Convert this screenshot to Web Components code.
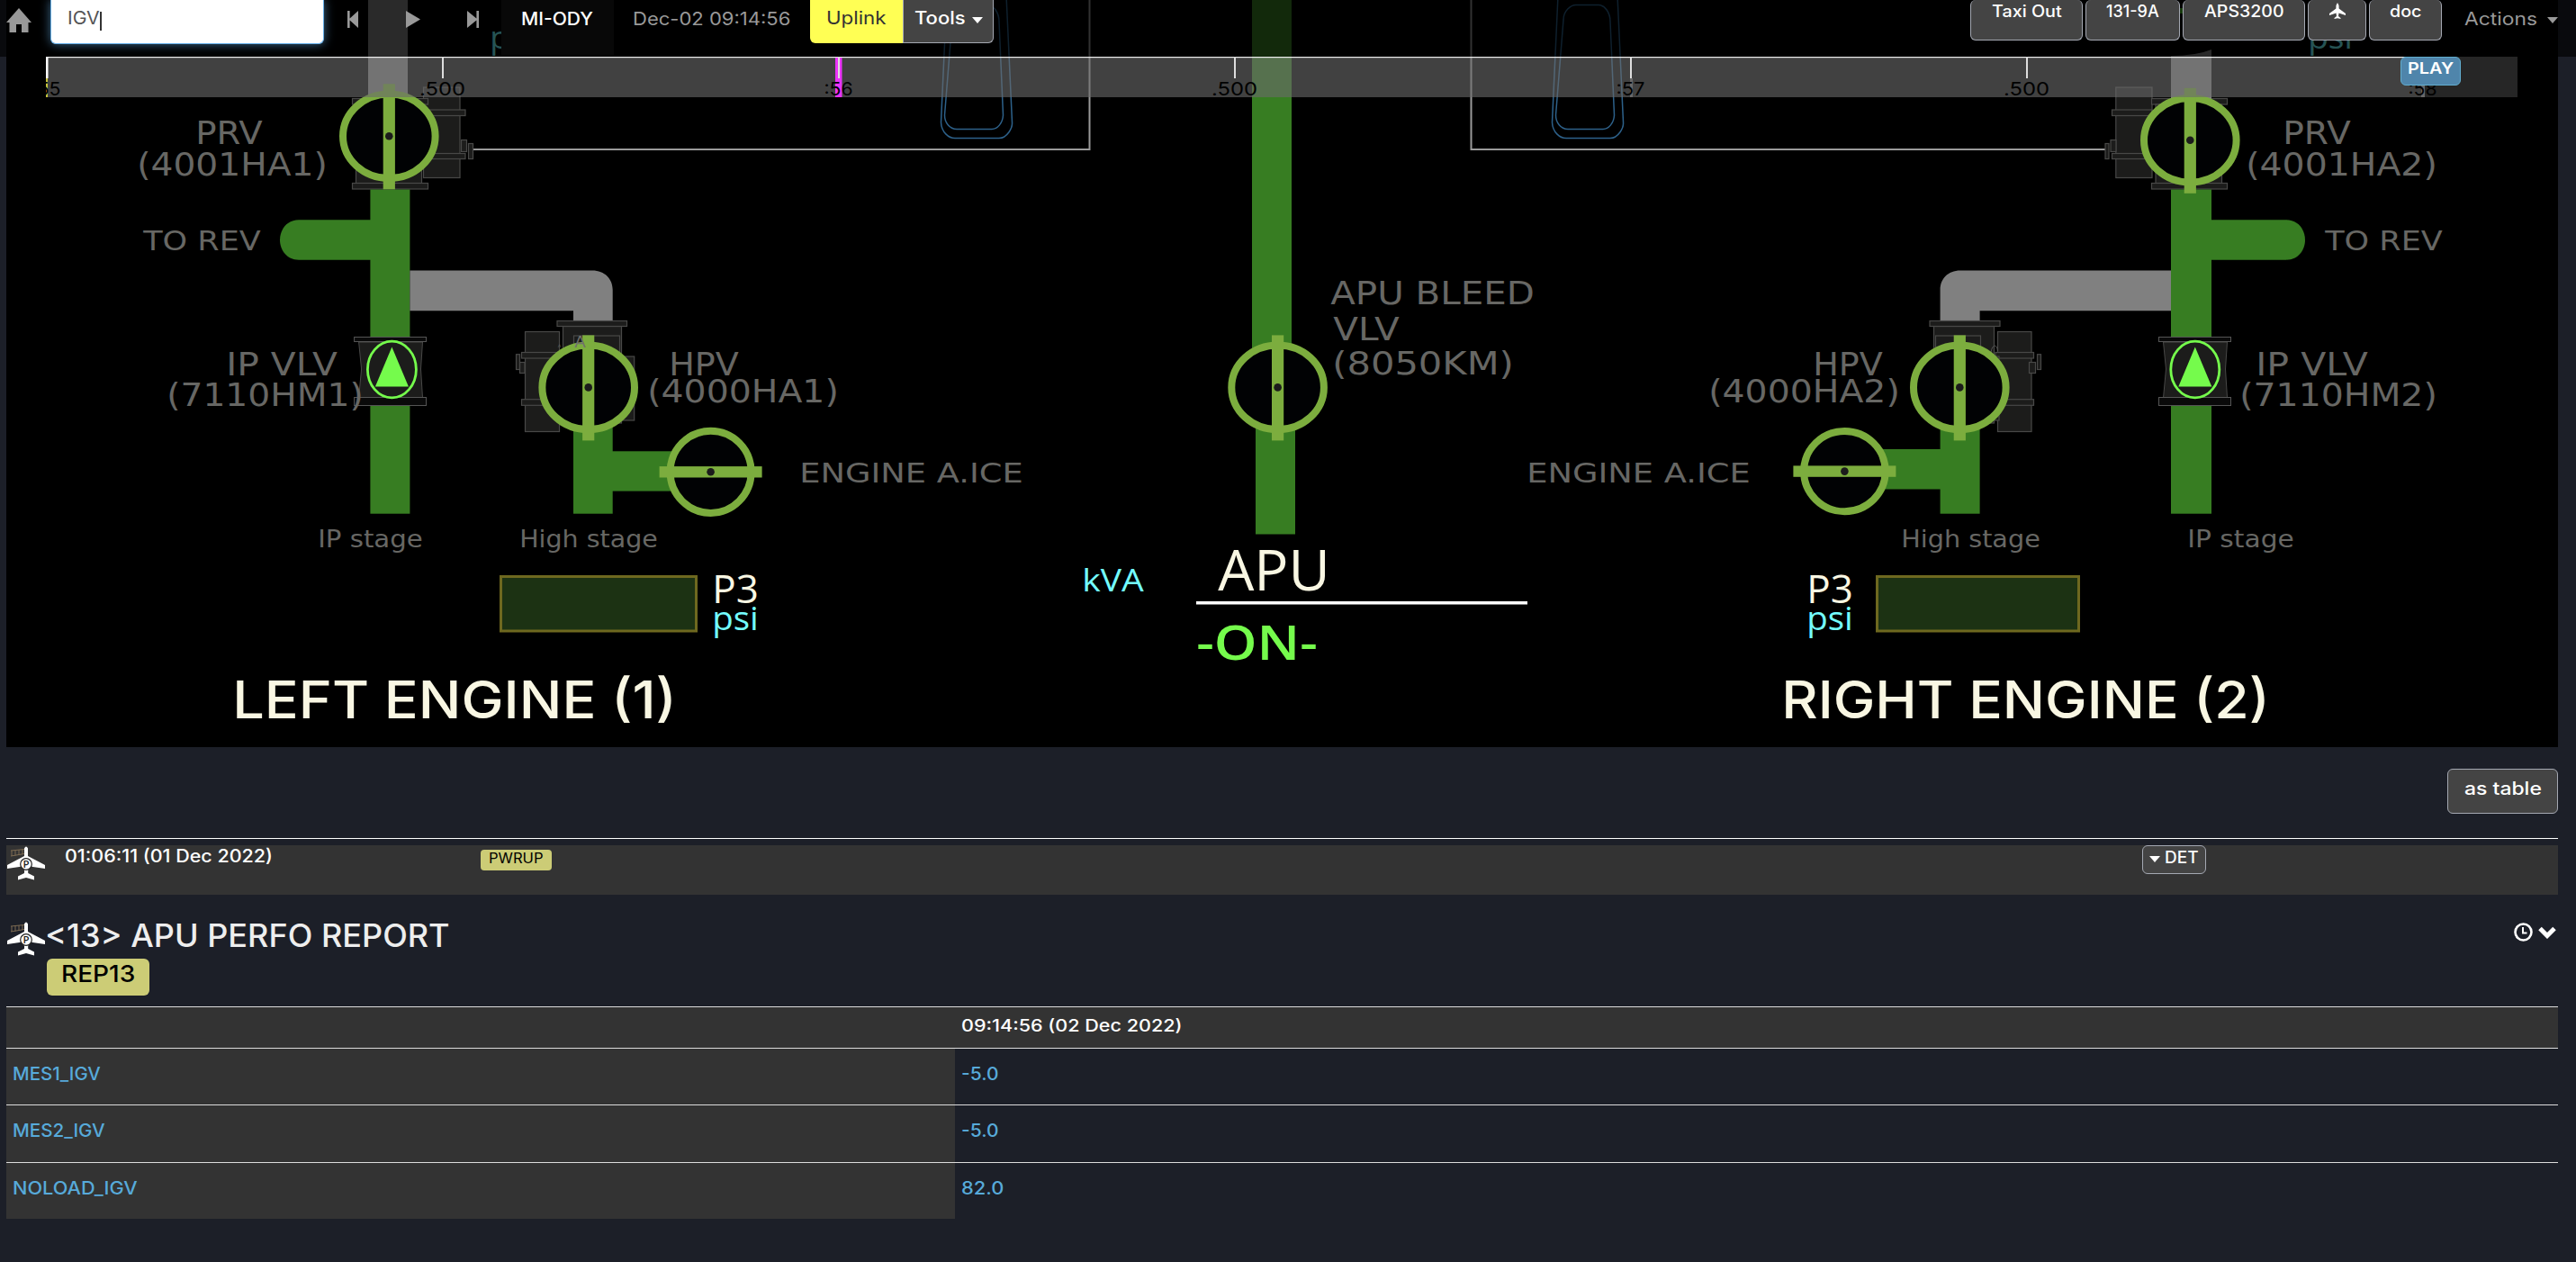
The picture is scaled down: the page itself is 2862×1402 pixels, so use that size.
<!DOCTYPE html>
<html lang="en">
<head>
<meta charset="utf-8">
<title>MI-ODY</title>
<style>
html,body{margin:0;background:#1c1f28}
body{width:2862px;height:1402px;overflow:hidden;font-family:Inter,"Open Sans",sans-serif;color:#fff}
</style>
</head>
<body>
<app-page></app-page>
<script>
const define = (name, html, after) => {
  const tpl = document.createElement('template');
  tpl.innerHTML = html;
  customElements.define(name, class extends HTMLElement {
    connectedCallback() {
      if (this.shadowRoot) return;
      const root = this.attachShadow({ mode: 'open' });
      root.appendChild(tpl.content.cloneNode(true));
      if (after) after(this, root);
    }
  });
};

/* One line of text, set to a given width (w) at a given size (s) in a line box of height h. */
customElements.define('fit-text', class extends HTMLElement {
  connectedCallback() {
    if (this.shadowRoot) return;
    const w = +this.getAttribute('w'), s = +this.getAttribute('s') || 20;
    const root = this.attachShadow({ mode: 'open' });
    root.innerHTML = `<style>
      :host{display:block;flex:none;width:${w}px;font-size:${s}px;line-height:24px;white-space:pre;overflow:visible}
      span{display:inline-block;transform-origin:0 50%}
    </style><span><slot></slot></span>`;
    const span = root.querySelector('span');
    span.style.transform = `scaleX(${w / span.offsetWidth})`;
  }
});

/* Bordered push button; the slot carries its label or icon. */
define('ui-button', `<style>
  :host{display:flex;flex:none;box-sizing:border-box;justify-content:center;align-items:flex-start;
    background:#444;border:1.5px solid #a4a8b2;border-radius:6px;color:#fff;font-weight:500}
</style><slot></slot>`);

define('ui-badge', `<style>
  :host{display:flex;flex:none;box-sizing:border-box;justify-content:center;background:#cccc76;border-radius:5px;color:#000}
</style><slot></slot>`);

define('ui-caret', `<style>:host{display:block;flex:none;width:12px;height:7px}svg{display:block}</style>
<svg width="12" height="7"><path d="M0 0H12L6 7Z" fill="currentColor"/></svg>`);

define('parked-plane', `<style>:host{display:block;flex:none;width:43px;height:38px}svg{display:block}</style>
<svg width="43" height="38" viewBox="0 0 43 38">
  <g fill="none" stroke="#7d6b52" stroke-width="1"><path d="M4 5L19 3.5M4 11L19 8.5M5 5v6M9 4.500v6M13 4v6M17 3.600v5.500"/></g>
  <path fill="#fff" d="M19 2.500Q21 -1.500 23 2.500V11L42 21V25L25 22.500L23.200 27V30L30 33.500V37.500L21 35L12 37.500V33.500L19 30V27L17 22.500L0 25V21L19 11Z"/>
  <circle cx="21" cy="20" r="6.300" fill="#fff" stroke="#222" stroke-width="1.200"/>
  <text x="21" y="24.200" font-size="11.500" text-anchor="middle" font-family="Open Sans,sans-serif" font-weight="600" fill="#222">P</text>
</svg>`);

/* ---------- bleed air synoptic ---------- */
const GREEN = '#377d22', GREY = '#808080', LIME = '#7cad3e', LABEL = '#676764';
const rect = (x1, y1, x2, y2, fill, extra = '') =>
  `<rect x="${x1}" y="${y1}" width="${x2 - x1}" height="${y2 - y1}" fill="${fill}" ${extra}/>`;
const part = (x1, y1, x2, y2) => rect(x1, y1, x2, y2, '#1c1c1b', 'stroke="#484847" stroke-width="1.2"');
const text = (x1, x2, y, size, fill, str, family = 'DejaVu Sans', weight = 400) =>
  `<text x="${x1 + 1.2}" y="${y}" font-size="${size}" fill="${fill}" font-weight="${weight}" font-family="${family},sans-serif" textLength="${x2 - x1 - 2.4}" lengthAdjust="spacingAndGlyphs">${str}</text>`;
const valve = (cx, cy, rx, ry, horizontal) =>
  `<ellipse cx="${cx}" cy="${cy}" rx="${rx - 3.7}" ry="${ry - 3.7}" fill="#010204" stroke="${LIME}" stroke-width="8"/>` +
  (horizontal ? rect(cx - 57, cy - 6.2, cx + 57, cy + 6.2, LIME) : rect(cx - 6.6, cy - 58, cx + 6.6, cy + 59, LIME)) +
  `<circle cx="${cx}" cy="${cy}" r="4.300" fill="#1c1c1c"/>`;
const ipValve = (x1, x2, cx) =>
  `<path d="M${x1 + 5} 380H${x2 - 4}L${x2 - 6} 410L${x2 - 4} 442H${x1 + 5}L${x1 + 8} 410Z" fill="#1c1c1b" stroke="#484847"/>` +
  rect(x1, 374.5, x2, 379.5, '#0a0a0a', 'stroke="#555"') + rect(x1, 441.5, x2, 450.5, '#0a0a0a', 'stroke="#555"') +
  `<ellipse cx="${cx}" cy="410.500" rx="27" ry="31.300" fill="#1c1c1b" stroke="#75fb4c" stroke-width="2.800"/>
   <path d="M${cx} 385.500L${cx + 18.5} 429.500H${cx - 18.5}Z" fill="#75fb4c"/>`;
const exchanger = dx => `<g transform="translate(${dx} 0)" fill="none" stroke="#2d618a" stroke-width="1.500">
   <path d="M1052 -5L1045.500 136C1046 147 1054 153.500 1061 153.500H1110C1119 153.500 1125 142 1124.500 136L1118 -5"/>
   <path d="M1058 22C1058 12 1066 5.500 1072 5.500H1097C1104 5.500 1110 14 1110 24L1114.500 128C1114 137 1108 143.500 1102 143.500H1063C1055 143.500 1049.500 136 1049.500 128Z"/></g>`;

define('bleed-synoptic', `<style>:host{display:block;width:2835px;height:830px;background:#000}svg{display:block}</style>
<svg width="2835" height="830" viewBox="7 0 2835 830">
  <g fill="none" stroke="#999" stroke-width="2">
    <path d="M523 166H1210.500V0"/><path d="M2340 166H1634.500V0"/>
  </g>
  ${exchanger(0)}${exchanger(679)}

  ${part(470.5, 97, 511, 197.5)}${part(391.5, 109.5, 475.5, 116)}${part(395.5, 116, 468.5, 204)}${part(391.5, 203.5, 475.5, 210)}
  ${part(470.5, 122, 517, 128.5)}${part(470.5, 170.5, 517, 176.5)}${part(512.5, 155.5, 518.5, 168.5)}${part(520.5, 159.5, 525.5, 176.5)}
  ${rect(409, 0, 453, 116, GREY)}
  ${rect(411.4, 210.5, 455.4, 375, GREEN)}${rect(411.4, 451, 455.4, 570.7, GREEN)}
  <path d="M412 244.300H332C318 244.300 311 256 311 266.500S318 288.700 332 288.700H412Z" fill="${GREEN}"/>
  <path d="M455.400 300.500H658C672 300.500 680.700 310 680.700 322V356H637V345.200H455.400Z" fill="${GREY}"/>
  ${valve(432.3, 151.3, 55, 50.5)}
  ${ipValve(393.6, 473.5, 435.4)}
  ${rect(637, 460, 680.7, 570.7, GREEN)}${rect(680, 501.3, 752, 545.6, GREEN)}
  ${part(583.5, 368.5, 621.5, 479.5)}${part(579.5, 391.5, 625, 398)}${part(579.5, 443.7, 625, 450.3)}
  ${part(577.5, 402.5, 583, 414.5)}${part(573.5, 393.7, 577.5, 410.5)}
  ${part(680, 396, 704.7, 467)}${part(625.5, 362.5, 690.5, 470)}${part(637.5, 373, 688.5, 420)}${part(619, 356.5, 696.5, 362.5)}
  ${valve(653.7, 430.4, 55, 50.5)}
  ${valve(789.6, 524.3, 48.7, 49.3, true)}
  ${text(637, 652, 386, 17, '#70706c', 'A')}${text(618, 625, 392, 12, '#5c5c5a', '^')}

  ${rect(1391, 0, 1435, 400, GREEN)}${rect(1395, 460, 1439, 593.5, GREEN)}
  ${valve(1419.6, 430.4, 55, 50.5)}

  ${part(2350.8, 97, 2391, 197.5)}${part(2346.5, 122, 2391, 128.5)}${part(2346.5, 170.5, 2391, 176.5)}${part(2345, 155.5, 2351, 168.5)}${part(2339, 159.5, 2343, 176.5)}
  ${part(2390.5, 109.5, 2474.5, 116)}${part(2395, 116, 2468.5, 204)}${part(2390.5, 203.5, 2474.5, 210)}
  <path d="M2412 116V62Q2440 62 2457 55V116Z" fill="${GREY}"/>
  <rect x="2418" y="9" width="12" height="6" fill="#4cb02e"/>
  ${rect(2412, 210.5, 2457, 375, GREEN)}${rect(2412, 451, 2457, 570.7, GREEN)}
  <path d="M2456 244.300H2540C2554 244.300 2561 256 2561 266.500S2554 288.700 2540 288.700H2456Z" fill="${GREEN}"/>
  <path d="M2412 300.500H2178C2164 300.500 2155.600 310 2155.600 322V356H2199.600V345.200H2412Z" fill="${GREY}"/>
  ${valve(2433.3, 155.8, 55, 50.5)}
  ${ipValve(2398.5, 2478.5, 2438.8)}
  ${rect(2155.6, 460, 2199.6, 570.7, GREEN)}${rect(2090, 499, 2156, 543.5, GREEN)}
  ${part(2219.5, 368.5, 2257, 479.5)}${part(2217, 391.5, 2259.5, 398)}${part(2217, 443.7, 2259.5, 450.3)}
  ${part(2254.5, 402.5, 2261.5, 414.5)}${part(2263.5, 393.7, 2267.5, 410.5)}
  ${part(2200, 396, 2221, 467)}${part(2148.5, 362.5, 2215.5, 470)}${part(2150.500, 373, 2200.5, 420)}${part(2144, 356.5, 2222, 362.5)}
  <path d="M2212 392C2213 382 2219 382 2219.500 390" fill="none" stroke="#555"/>
  ${valve(2177.3, 430.4, 55, 50.5)}
  ${valve(2049.4, 523.6, 49, 48.4, true)}

  ${text(216, 293, 160, 35.5, LABEL, 'PRV')}${text(151, 365, 195, 35.5, LABEL, '(4001HA1)')}
  ${text(158, 291, 278, 30, LABEL, 'TO REV')}
  ${text(250, 376, 417, 35.5, LABEL, 'IP VLV')}${text(184, 405, 451, 35.500, LABEL, '(7110HM1)')}
  ${text(742, 822, 417, 35.5, LABEL, 'HPV')}${text(718, 933, 447, 35.5, LABEL, '(4000HA1)')}
  ${text(887, 1138, 536, 30, LABEL, 'ENGINE A.ICE')}
  ${text(352, 471, 607.5, 26, LABEL, 'IP stage')}${text(576, 732, 607.5, 26, LABEL, 'High stage')}
  ${text(1477, 1706, 338, 35, LABEL, 'APU BLEED')}${text(1480, 1556, 378, 35, LABEL, 'VLV')}${text(1479, 1683, 416, 35, LABEL, '(8050KM)')}
  ${text(2535, 2613, 160, 35.5, LABEL, 'PRV')}${text(2494, 2709, 195, 35.5, LABEL, '(4001HA2)')}
  ${text(2582, 2715, 278, 30, LABEL, 'TO REV')}
  ${text(2505, 2632, 417, 35.5, LABEL, 'IP VLV')}${text(2487, 2709, 451, 35.5, LABEL, '(7110HM2)')}
  ${text(2013, 2093, 417, 35.5, LABEL, 'HPV')}${text(1897, 2112, 447, 35.5, LABEL, '(4000HA2)')}
  ${text(1695, 1946, 536, 30, LABEL, 'ENGINE A.ICE')}
  ${text(2111, 2268, 607.5, 26, LABEL, 'High stage')}${text(2429, 2550, 607.5, 26, LABEL, 'IP stage')}

  ${rect(556.5, 640.5, 773.5, 701, '#1c3213', 'stroke="#6e681f" stroke-width="3"')}
  ${rect(2085.5, 640.5, 2309.5, 701, '#1c3213', 'stroke="#6e681f" stroke-width="3"')}
  ${text(790, 844, 670, 43, '#f9f7e3', 'P3', 'Open Sans', 500)}${text(790, 844, 700, 36, '#73fbfd', 'psi', 'Open Sans', 500)}
  ${text(2006, 2060, 670, 43, '#f9f7e3', 'P3', 'Open Sans', 500)}${text(2006, 2060, 700, 36, '#73fbfd', 'psi', 'Open Sans', 500)}
  ${text(1201, 1272, 657, 35, '#73fbfd', 'kVA', 'Open Sans', 500)}
  ${text(1352, 1479, 656, 63, '#f9f7e3', 'APU', 'Open Sans', 500)}
  ${rect(1329, 668, 1697, 671.5, '#fff')}
  ${text(1328, 1465, 733, 52, '#75fb4c', '-ON-', 'Open Sans', 600)}
  ${text(257, 753, 798, 58, '#f9f7e3', 'LEFT ENGINE (1)', 'Inter', 500)}
  ${text(1978, 2523, 798, 58, '#f9f7e3', 'RIGHT ENGINE (2)', 'Inter', 500)}
  ${text(543, 594, 54, 35, '#73fbfd', 'psi', 'Open Sans', 500)}${text(2563, 2615, 54, 35, '#73fbfd', 'psi', 'Open Sans', 500)}
</svg>`);

/* ---------- time ruler ---------- */
const tick = x => rect(x - 1, 0, x + 1, 24, '#ddd');
const mark = (x, str) => `<text x="${x}" y="43" font-size="20" text-anchor="middle" fill="#000" font-family="Inter,sans-serif" textLength="${str.length > 3 ? 51 : 32}" lengthAdjust="spacingAndGlyphs">${str}</text>`;
define('time-ruler', `<style>
  :host{display:flex;align-items:flex-start;justify-content:flex-end;width:2746px;height:45px;box-sizing:border-box;padding-right:63px;
    position:absolute;left:51px;top:63px}
  svg{position:absolute;left:0;top:0;display:block;overflow:visible;clip-path:inset(0 0 -8px 0)}
  ui-button{position:relative;width:67px;height:32px;background:#4f85ab;border-color:#62aed0}
  fit-text{font-weight:600}
</style>
<svg width="2746" height="45" viewBox="51 0 2746 45">
  ${rect(51, 0, 2694, 45, '#6b6b6b', 'fill-opacity=".61"')}${rect(2694, 0, 2797, 45, '#404040', 'fill-opacity=".6"')}
  ${rect(51, 0, 2680, 1.2, '#eee')}
  ${rect(51, 0, 53, 45, '#c8c23c')}${rect(51, 0, 53.5, 24, '#fff')}${rect(1811, 24, 1814, 45, '#686868')}${rect(2690, 24, 2694, 45, '#686868')}
  ${rect(928, 1, 935.5, 45, '#ea33f7')}
  ${[492, 932, 1372, 1812, 2252].map(tick).join('')}
  ${mark(51.5, ':55')}${mark(491.5, '.500')}${mark(931.5, ':56')}${mark(1371.5, '.500')}${mark(1811.5, ':57')}${mark(2251.5, '.500')}${mark(2691.5, ':58')}
</svg>
<ui-button><fit-text w="51" s="17.500">PLAY</fit-text></ui-button>`);

/* ---------- top bar ---------- */
define('top-bar', `<style>
  :host{display:flex;align-items:flex-start;box-sizing:border-box;position:absolute;left:0;top:0;width:2862px;height:63px;
    background:rgba(0,0,0,.67);color:#999;font-weight:400}
  svg{display:block;flex:none}
  .home{margin:9px 21px 0 7px}
  .search{box-sizing:border-box;width:304px;height:49px;flex:none;display:flex;padding:8px 0 0 18px;background:#fff;border:1.500px solid #66afe9;border-top:0;
    border-radius:0 0 6px 6px;box-shadow:0 0 12px rgba(102,175,233,.6);color:#555}
  .search i{width:1.500px;height:21px;margin:5px 0 0 0;background:#333}
  .prev{margin:12px 53px 0 26px}.play{margin:12px 52px 0 0}.next{margin:12px 25px 0 0}
  .tail{box-sizing:border-box;width:125px;height:61px;flex:none;background:#080808;color:#fff;padding:9px 0 0 22px;font-weight:500}
  .date{margin:9px 22px 0 21px}
  .uplink{box-sizing:border-box;width:103px;height:48px;flex:none;display:flex;justify-content:center;padding-top:8px;background:#ffff54;color:#333;border-radius:0 0 0 6px}
  .tools{width:101px;height:48px;border-top:0;border-radius:0 0 6px 0;padding-top:8px;gap:8px}
  .tools ui-caret{margin-top:11px}
  .group{display:flex;gap:3px;margin-left:auto}
  .group ui-button{height:45px;border-top:0}
  .group fit-text{margin-top:1px}
  .actions{display:flex;gap:11px;margin:9px 20px 0 25px}
  .actions ui-caret{margin-top:10px}
</style>
<svg class="home" width="28" height="27" viewBox="0 0 28 27"><path d="M14 0L28 16H24.500V27H17V18H11V27H3.500V16H0Z" fill="#999"/></svg>
<div class="search"><fit-text w="36" s="20">IGV</fit-text><i></i></div>
<svg class="prev" width="12" height="19"><path d="M0 0H2.600V8.500L12 0V19L2.600 10.500V19H0Z" fill="#999"/></svg>
<svg class="play" width="16" height="19"><path d="M0 0L16 9.500L0 19Z" fill="#999"/></svg>
<svg class="next" width="13" height="19"><path d="M13 0H10.400V8.500L0 0V19L10.400 10.500V19H13Z" fill="#999"/></svg>
<div class="tail"><fit-text w="80" s="20">MI-ODY</fit-text></div>
<fit-text class="date" w="175" s="20">Dec-02 09:14:56</fit-text>
<div class="uplink"><fit-text w="67" s="20">Uplink</fit-text></div>
<ui-button class="tools"><fit-text w="56" s="20">Tools</fit-text><ui-caret></ui-caret></ui-button>
<div class="group">
  <ui-button style="width:125px"><fit-text w="78" s="18">Taxi Out</fit-text></ui-button>
  <ui-button style="width:105px"><fit-text w="59" s="18">131-9A</fit-text></ui-button>
  <ui-button style="width:136px"><fit-text w="89" s="18">APS3200</fit-text></ui-button>
  <ui-button style="width:65px"><svg style="margin-top:3px" width="18" height="18" viewBox="0 0 18 18"><path d="M9 0Q10.800 2 10.600 6.500L18 12V14L10.500 11.500L10 15L12.500 17V18L9 17.300L5.500 18V17L8 15L7.500 11.500L0 14V12L7.400 6.500Q7.200 2 9 0Z" fill="#fff"/></svg></ui-button>
  <ui-button style="width:81px"><fit-text w="35" s="18">doc</fit-text></ui-button>
</div>
<div class="actions"><fit-text w="81" s="20">Actions</fit-text><ui-caret></ui-caret></div>`);

/* ---------- report list ---------- */
define('event-row', `<style>
  :host{display:flex;align-items:flex-start;height:55px;background:#333;font-weight:500}
  parked-plane{margin:1px 21px 0 1px}
  ui-badge{width:79px;height:23px;margin:5px 0 0 231px;border-radius:4px;font-weight:400}
  ui-badge fit-text{margin-top:-2px}
  ui-button{width:71px;height:32px;margin-left:auto;margin-right:391px;gap:5px}
  ui-caret{margin-top:11px}
  ui-button fit-text{margin-top:1px}
</style>
<parked-plane></parked-plane><fit-text w="231" s="20">01:06:11 (01 Dec 2022)</fit-text>
<ui-badge><fit-text w="61" s="15.500">PWRUP</fit-text></ui-badge>
<ui-button><ui-caret></ui-caret><fit-text w="38" s="18">DET</fit-text></ui-button>`);

define('report-heading', `<style>
  :host{display:flex;align-items:flex-start;height:94px;margin-top:30px}
  parked-plane{margin:0 1px 0 1px}
  .name{display:flex;flex-direction:column;gap:14px;color:#eee}
  .name>fit-text{margin:3px 0 0 -2px;font-weight:500}
  ui-badge{width:114px;height:41px;font-weight:500;border-radius:6px}
  ui-badge fit-text{margin-top:5px}
  .icons{display:flex;gap:6px;margin:1px 2px 0 auto;align-items:center}
  svg{display:block}
</style>
<parked-plane></parked-plane>
<div class="name"><fit-text w="450" s="35">&lt;13&gt; APU PERFO REPORT</fit-text><ui-badge><fit-text w="82" s="26">REP13</fit-text></ui-badge></div>
<div class="icons">
  <svg width="21" height="21"><circle cx="10.500" cy="10.500" r="9" fill="none" stroke="#fff" stroke-width="2.600"/><path d="M10 5V11.500H14.500" fill="none" stroke="#fff" stroke-width="2"/></svg>
  <svg width="20" height="14"><path d="M2 2.500L10 10.500L18 2.500" fill="none" stroke="#fff" stroke-width="5"/></svg>
</div>`);

define('report-row', `<style>
  :host{display:flex;box-sizing:border-box;height:63.300px;border-top:1.500px solid #ddd;color:#57aada;font-weight:500}
  div{box-sizing:border-box;padding:16px 0 0 7px}
  .key{width:1054px;flex:none;background:#333}
  :host([head]){height:46px;background:#333;color:#fff}
  :host([head]) div{padding-top:8px}
</style><div class="key"><slot name="key"></slot></div><div><slot></slot></div>`);

define('app-page', `<style>
  :host{display:block;position:relative;width:2862px;height:1402px;background:#1c1f28}
  main{display:flex;flex-direction:column;padding:0 20px 0 7px}
  .switch{display:flex;justify-content:flex-end;padding-top:24px;height:77px;box-sizing:border-box;border-bottom:0}
  .switch ui-button{width:123px;height:50px}
  .switch fit-text{margin-top:9px}
  hr{width:100%;height:1px;border:0;margin:24px 0 7px;background:#fff}
</style>
<main>
  <bleed-synoptic></bleed-synoptic>
  <div class="switch"><ui-button><fit-text w="86" s="20">as table</fit-text></ui-button></div>
  <hr>
  <event-row></event-row>
  <report-heading></report-heading>
  <report-row head><fit-text w="246" s="18.500">09:14:56 (02 Dec 2022)</fit-text></report-row>
  <report-row><fit-text slot="key" w="98" s="20">MES1_IGV</fit-text><fit-text w="42" s="20">-5.0</fit-text></report-row>
  <report-row><fit-text slot="key" w="103" s="20">MES2_IGV</fit-text><fit-text w="42" s="20">-5.0</fit-text></report-row>
  <report-row><fit-text slot="key" w="139" s="20">NOLOAD_IGV</fit-text><fit-text w="47" s="20">82.0</fit-text></report-row>
</main>
<time-ruler></time-ruler>
<top-bar></top-bar>`);
</script>
</body>
</html>
